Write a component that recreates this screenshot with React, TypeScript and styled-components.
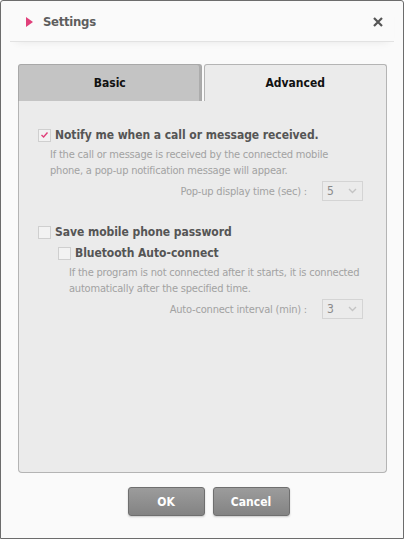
import React from "react";
import { styled, createGlobalStyle } from "styled-components";

const GlobalStyle = createGlobalStyle`
  html, body {
    margin: 0;
    padding: 0;
    background: #ffffff;
  }
  body {
    font-family: "DejaVu Sans Condensed", "DejaVu Sans", sans-serif;
  }
`;

const Window = styled.div`
  box-sizing: border-box;
  width: 404px;
  height: 539px;
  border: 1px solid #6c6c6c;
  border-radius: 3px 3px 0 0;
  background: #fafafa;
  display: flex;
  flex-direction: column;
`;

const TitleBar = styled.div`
  display: flex;
  align-items: center;
  height: 40px;
  margin: 0 9px;
  padding: 0 11px 0 16px;
  border-bottom: 1px solid #e2e2e2;
  box-shadow: 0 6px 8px -6px rgba(0, 0, 0, 0.08);
`;

const Arrow = styled.span`
  width: 0;
  height: 0;
  border-top: 5px solid transparent;
  border-bottom: 5px solid transparent;
  border-left: 7px solid #e0407a;
  margin-right: 10px;
  margin-top: 1px;
`;

const Title = styled.h1`
  flex: 1;
  margin: 0;
  font-size: 13px;
  letter-spacing: -0.3px;
  font-weight: bold;
  color: #5e5e5e;
`;

const Close = styled.svg`
  width: 10px;
  height: 10px;
  margin-top: 2px;
`;

const Body = styled.div`
  flex: 1;
  display: flex;
  flex-direction: column;
  padding: 22px 16px 0 17px;
`;

const TabRow = styled.div`
  display: flex;
  gap: 2px;
`;

const Tab = styled.div<{ $active?: boolean }>`
  flex: 1;
  box-sizing: border-box;
  height: 37px;
  display: flex;
  align-items: center;
  justify-content: center;
  font-size: 12px;
  font-weight: bold;
  color: #111;
  border: 1px solid ${({ $active }) => ($active ? "#b4b4b4" : "#a8a8a8")};
  border-bottom: none;
  border-radius: 3px 3px 0 0;
  background: ${({ $active }) => ($active ? "#ebebeb" : "#c4c4c4")};
  box-shadow: ${({ $active }) =>
    $active ? "none" : "inset -2px 0 0 #acacac"};
`;

const Panel = styled.div`
  box-sizing: border-box;
  height: 372px;
  background: #ebebeb;
  border: 1px solid #b4b4b4;
  border-top: none;
  border-radius: 0 0 4px 4px;
  padding: 24px 0 0 19px;
`;

const Option = styled.label<{ $indent?: number; $gap?: number }>`
  display: flex;
  align-items: center;
  margin: ${({ $gap }) => $gap ?? 0}px 0 0 ${({ $indent }) => $indent ?? 0}px;
  font-size: 12px;
  letter-spacing: -0.05px;
  font-weight: bold;
  color: #555;
  height: 20px;
`;

const Box = styled.span`
  box-sizing: border-box;
  width: 13px;
  height: 13px;
  margin-right: 4px;
  border: 1px solid #cfcfcf;
  background: #f2f2f2;
  display: flex;
  align-items: center;
  justify-content: center;
`;

const Description = styled.p<{ $indent?: number }>`
  margin: 2px 0 0 ${({ $indent }) => $indent ?? 0}px;
  width: 300px;
  font-size: 11px;
  letter-spacing: -0.2px;
  line-height: 16px;
  color: #a2a2a2;
`;

const SettingRow = styled.div`
  display: flex;
  align-items: center;
  justify-content: flex-end;
  gap: 15px;
  padding-right: 23px;
  margin-top: 2px;
  font-size: 11px;
  letter-spacing: -0.2px;
  color: #a2a2a2;
`;

const Select = styled.div`
  box-sizing: border-box;
  width: 41px;
  height: 20px;
  border: 1px solid #d4d4d4;
  display: flex;
  align-items: center;
  justify-content: space-between;
  padding: 0 5px 0 4px;
  font-size: 12px;
  color: #8a8a8a;
`;

const Group = styled.div<{ $gap?: number }>`
  margin-top: ${({ $gap }) => $gap ?? 0}px;
`;

const Footer = styled.div`
  display: flex;
  justify-content: center;
  gap: 8px;
  padding-top: 14px;
  padding-left: 12px;
`;

const Button = styled.button`
  box-sizing: border-box;
  width: 77px;
  height: 29px;
  border: 1px solid #6f6f6f;
  border-radius: 3px;
  background: linear-gradient(#9c9c9c, #838383);
  box-shadow: 0 1px 2px rgba(0, 0, 0, 0.2);
  color: #fff;
  font-family: inherit;
  font-size: 12px;
  font-weight: bold;
`;

const Check = () => (
  <svg width="9" height="8" viewBox="0 0 9 8">
    <path d="M1.5 4 L3.6 6 L7.5 1.5" fill="none" stroke="#e0407a" strokeWidth="1.4" />
  </svg>
);

const Chevron = () => (
  <svg width="9" height="6" viewBox="0 0 9 6">
    <path d="M1 1 L4.5 4.5 L8 1" fill="none" stroke="#c4c4c4" strokeWidth="1.4" />
  </svg>
);

export default function App() {
  return (
    <>
      <GlobalStyle />
      <Window>
        <TitleBar>
          <Arrow />
          <Title>Settings</Title>
          <Close viewBox="0 0 10 10">
            <path d="M1 1 L9 9 M9 1 L1 9" stroke="#555" strokeWidth="2.2" />
          </Close>
        </TitleBar>
        <Body>
          <TabRow>
            <Tab>Basic</Tab>
            <Tab $active>Advanced</Tab>
          </TabRow>
          <Panel>
            <Group>
              <Option>
                <Box>
                  <Check />
                </Box>
                Notify me when a call or message received.
              </Option>
              <Description $indent={12}>
                If the call or message is received by the connected mobile
                phone, a pop-up notification message will appear.
              </Description>
              <SettingRow>
                Pop-up display time (sec) :
                <Select>
                  5
                  <Chevron />
                </Select>
              </SettingRow>
            </Group>
            <Group $gap={21}>
              <Option>
                <Box />
                Save mobile phone password
              </Option>
              <Option $indent={20} $gap={1}>
                <Box />
                Bluetooth Auto-connect
              </Option>
              <Description $indent={31}>
                If the program is not connected after it starts, it is
                connected automatically after the specified time.
              </Description>
              <SettingRow>
                Auto-connect interval (min) :
                <Select>
                  3
                  <Chevron />
                </Select>
              </SettingRow>
            </Group>
          </Panel>
          <Footer>
            <Button>OK</Button>
            <Button>Cancel</Button>
          </Footer>
        </Body>
      </Window>
    </>
  );
}
